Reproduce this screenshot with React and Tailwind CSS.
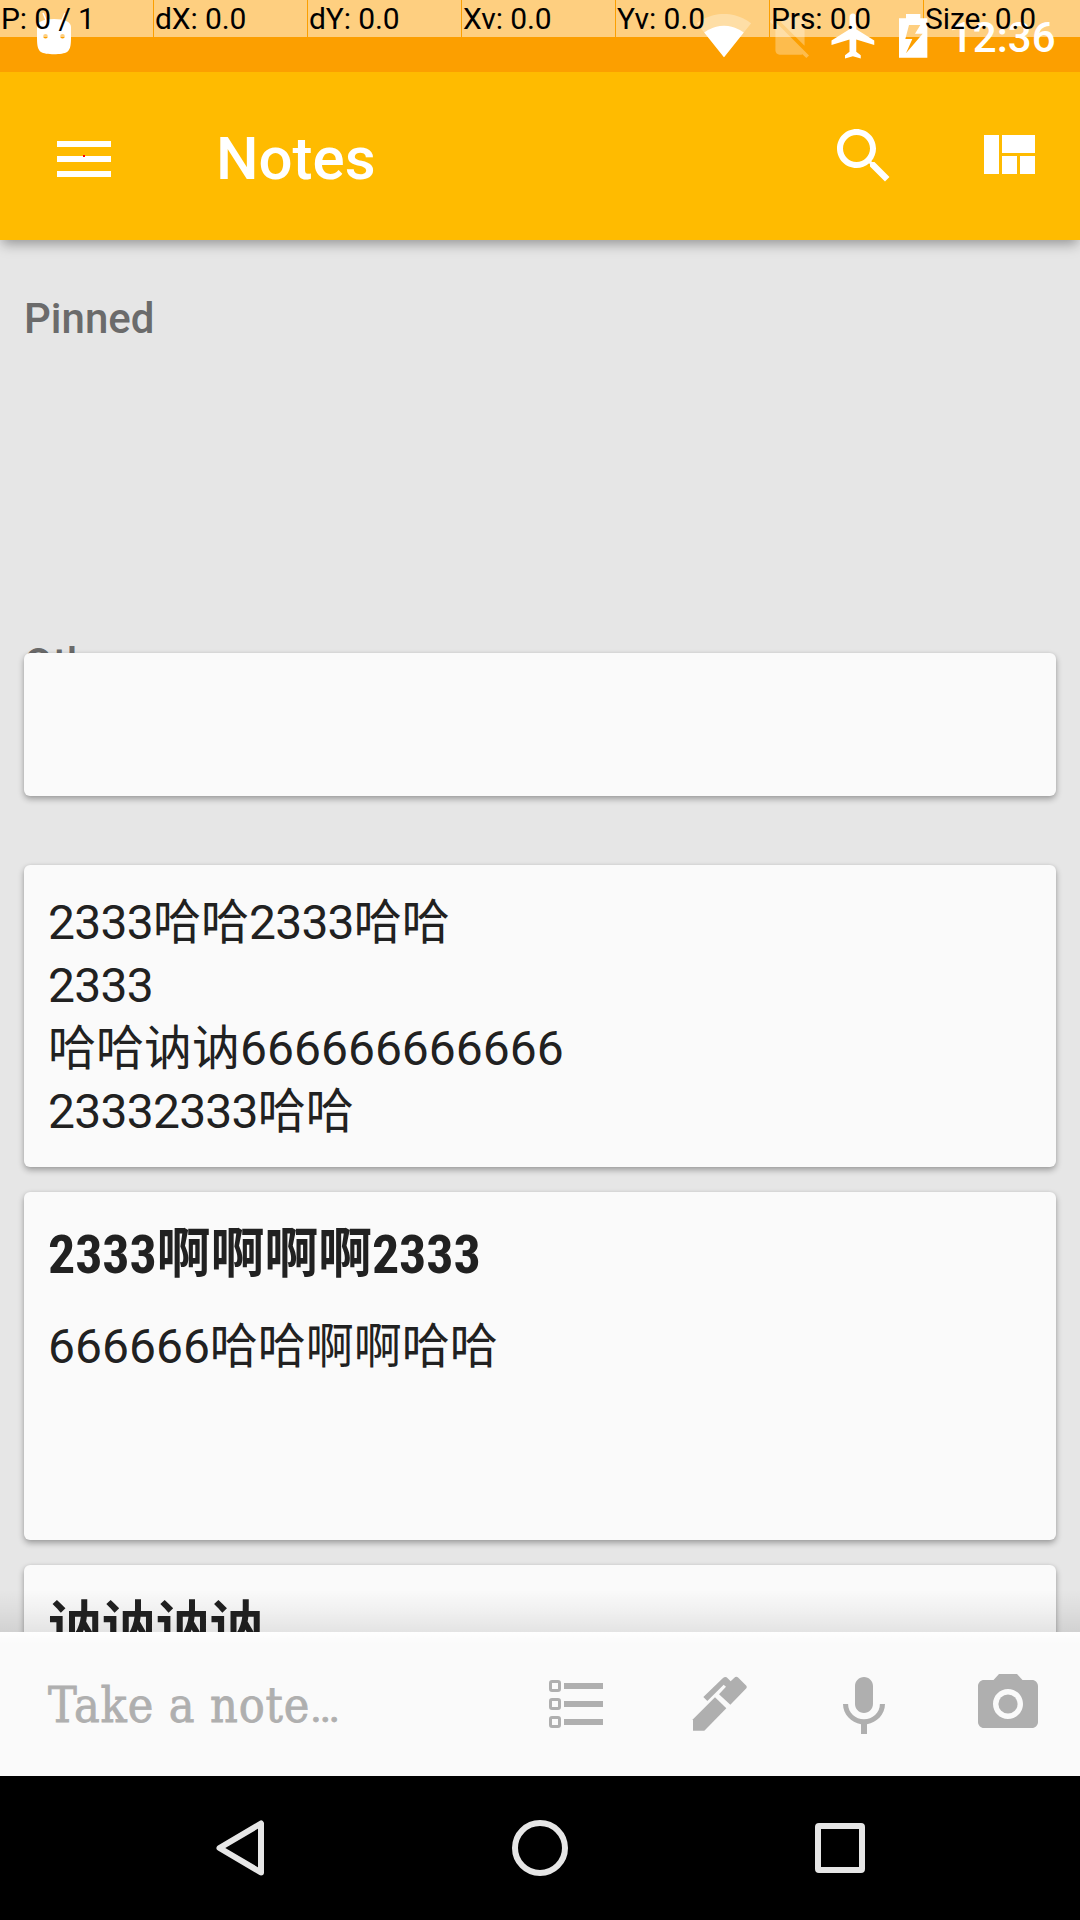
const pointerReadings = ['P: 0 / 1', 'dX: 0.0', 'dY: 0.0', 'Xv: 0.0', 'Yv: 0.0', 'Prs: 0.0', 'Size: 0.0'];

function Icon({ viewBox = '0 0 24 24', className = 'size-[72px]', children }) {
  return (
    <svg viewBox={viewBox} className={`${className} block shrink-0`} fill="currentColor" aria-hidden="true">
      {children}
    </svg>
  );
}

function PointerBar() {
  return (
    <div className="absolute inset-x-0 top-0 z-30 flex h-[37px] gap-px">
      {pointerReadings.map((text) => (
        <div
          key={text}
          className="w-[153px] shrink-0 whitespace-nowrap bg-white/50 pl-px text-[30px] leading-[37px] tracking-[-0.1px] text-black last:w-auto last:flex-1"
        >
          {text}
        </div>
      ))}
    </div>
  );
}

function StatusBar() {
  return (
    <div className="relative z-20 flex h-[72px] items-start bg-[#fc9f00] pl-[36px] text-white">
      <Icon viewBox="0 0 36 60" className="h-[60px] w-[36px]">
        <path
          fillRule="evenodd"
          d="M1 27C1 22 7 19 18 19S35 22 35 27V38C35 46 34 50 31 52C27 55 9 55 5 52C2 50 1 46 1 38ZM9.5 34A2.3 2.3 0 1 0 9.5 38.600A2.300 2.300 0 1 0 9.500 34ZM26.500 34A2.300 2.300 0 1 0 26.500 38.600A2.300 2.300 0 1 0 26.500 34Z"
        />
        <path d="M7 13l3 7M29 13l-3 7" stroke="currentColor" strokeWidth="1.5" />
      </Icon>
      <Icon className="mt-[7px] ml-[624px] size-[56px]">
        <path
          opacity=".3"
          d="M12.010 21.490L23.640 7c-.45-.34-4.930-4-11.640-4C5.280 3 .81 6.660.36 7l11.630 14.490.01.01.01-.01z"
        />
        <path d="M3.530 10.950l8.460 10.540.01.01.01-.01 8.460-10.540C20.040 10.620 16.810 8 12 8c-4.810 0-8.040 2.620-8.470 2.950z" />
      </Icon>
      <Icon className="mt-[11px] ml-[13px] size-[50px]">
        <path
          opacity=".3"
          d="M18.990 5c0-1.100-.89-2-1.990-2h-7L7.660 5.340 19 16.680 18.990 5zM3.650 3.880L2.380 5.150 5 7.770V19c0 1.100.9 2 2 2h10.010c.35 0 .67-.1.96-.26l1.880 1.880 1.270-1.270L3.650 3.880z"
        />
      </Icon>
      <Icon className="mt-[9px] ml-[12px] size-[54px]">
        <path d="M21 16v-2l-8-5V3.500c0-.83-.67-1.500-1.500-1.500S10 2.670 10 3.500V9l-8 5v2l8-2.500V19l-2 1.500V22l3.500-1 3.500 1v-1.500L13 19v-5.500l8 2.500z" />
      </Icon>
      <Icon viewBox="235 39 90 138" className="mt-[13px] ml-[17px] h-[46px] w-[30px]">
        <path
          fillRule="evenodd"
          d="M259 42H302V55H323V173H238V55H259ZM268 75L257 117H278L259 160L309 101H286L302 75Z"
        />
      </Icon>
      <div className="mt-[2px] ml-[21px] text-[42px] leading-[72px] font-medium">12:36</div>
    </div>
  );
}

function Toolbar() {
  return (
    <header className="relative z-10 flex h-[168px] items-center bg-[#ffbb00] pr-[36px] pl-[48px] text-white shadow-[0_6px_12px_-2px_rgba(0,0,0,0.35)]">
      <Icon viewBox="0 0 72 72">
        <path d="M9 21h54v6H9zM9 36h54v6H9zM9 51h54v6H9z" />
        <path d="M35 35h2v2h-2z" fill="#ff0000" />
      </Icon>
      <h1 className="mt-[5px] ml-[96px] flex-1 text-[60px] leading-[72px] font-medium">Notes</h1>
      <div className="flex gap-[72px]">
        <Icon>
          <path d="M15.500 14h-.79l-.28-.27C15.410 12.590 16 11.110 16 9.500 16 5.910 13.090 3 9.500 3S3 5.910 3 9.500 5.910 16 9.500 16c1.610 0 3.090-.59 4.230-1.570l.27.28v.79l5 4.990L20.490 19l-4.990-5zm-6 0C7.010 14 5 11.990 5 9.500S7.010 5 9.500 5 14 7.010 14 9.500 11.990 14 9.500 14z" />
        </Icon>
        <Icon>
          <path d="M10 18h5v-6h-5v6zm-6 0h5V5H4v13zm12 0h5v-6h-5v6zM10 5v6h11V5H10z" />
        </Icon>
      </div>
    </header>
  );
}

function Card({ className, children }) {
  return (
    <article
      className={`${className} relative shrink-0 rounded-[6px] bg-[#fafafa] px-[24px] pt-[26px] text-[#212121] shadow-[0_3px_6px_rgba(0,0,0,0.32),0_0_3px_rgba(0,0,0,0.06)]`}
    >
      {children}
    </article>
  );
}

function Title({ children }) {
  return (
    <h2 className="relative top-px font-['Roboto_Condensed','Noto_Sans_CJK_SC',sans-serif] text-[54px] leading-[72px] font-bold tracking-[-0.15px] whitespace-nowrap">
      {children}
    </h2>
  );
}

// Digit groups set slightly tighter than the characters around them.
function Tight({ children }) {
  return <span className="tracking-[-0.75px]">{children}</span>;
}

function NoteList() {
  return (
    <main className="flex min-h-0 flex-1 flex-col overflow-hidden px-[24px] pt-[55px]">
      <div className="text-[42px] leading-[48px] font-medium text-[#6b6b6b]">Pinned</div>
      <div className="mt-[297px] text-[42px] leading-[48px] font-medium text-[#6b6b6b]">Others</div>
      <Card className="mt-[-35px] h-[143px]" />
      <Card className="mt-[69px] h-[302px]">
        <div className="text-[48px] leading-[63px] whitespace-nowrap">
          <p><Tight>2333</Tight>哈哈<Tight>2333</Tight>哈哈</p>
          <p><Tight>2333</Tight></p>
          <p>哈哈讷讷666666666666</p>
          <p><Tight>23332333</Tight>哈哈</p>
        </div>
      </Card>
      <Card className="mt-[25px] h-[348px]">
        <Title>2333啊啊啊啊2333</Title>
        <p className="mt-[25px] text-[48px] leading-[63px] whitespace-nowrap">666666哈哈啊啊哈哈</p>
      </Card>
      <Card className="mt-[25px] h-[302px]">
        <Title>讷讷讷讷</Title>
      </Card>
    </main>
  );
}

function QuickEntry() {
  return (
    <div className="relative z-10 flex h-[144px] shrink-0 items-center bg-[#fafafa] pr-[36px] pl-[48px] text-[#afafaf]">
      <div className="absolute inset-x-0 bottom-full h-[42px] bg-linear-to-t from-black/9 via-black/4 to-transparent" />
      <div className="absolute inset-x-0 top-0 h-[12px] bg-linear-to-b from-white to-transparent" />
      <div className="mt-[3px] flex-1 font-['Roboto_Slab','DejaVu_Serif_Condensed','DejaVu_Serif',serif] text-[48px] leading-[72px] tracking-[0.9px] whitespace-nowrap [-webkit-text-stroke:0.8px_#afafaf]">
        Take a note<span className="font-['Roboto',sans-serif] text-[44px] tracking-normal">…</span>
      </div>
      <div className="flex gap-[72px]">
        <Icon viewBox="0 0 72 72">
          <path d="M24 15h39v6H24zM24 33h39v6H24zM24 51h39v6H24z" />
          <g fill="none" stroke="currentColor" strokeWidth="3">
            <rect x="10.5" y="13.5" width="9" height="9" rx="1.500" />
            <rect x="10.5" y="31.5" width="9" height="9" rx="1.500" />
            <rect x="10.5" y="49.5" width="9" height="9" rx="1.500" />
          </g>
        </Icon>
        <Icon viewBox="12 24 216 216">
          <path d="M39 178L105 112L139 145L73 212H39Z" />
          <path d="M70 111L129 54Q137 47 143 55L152 64L163 53Q169 48 175 53L199 77Q202 81 199 85L151 134L117 103L138 80L131 74L82 123Z" />
        </Icon>
        <Icon viewBox="0 -1 24 24">
          <path d="M12 14c1.660 0 2.990-1.340 2.990-3L15 5c0-1.660-1.340-3-3-3S9 3.340 9 5v6c0 1.660 1.340 3 3 3zm5.300-3c0 3-2.540 5.100-5.300 5.100S6.700 14 6.700 11H5c0 3.410 2.720 6.230 6 6.720V21h2v-3.280c3.280-.48 6-3.300 6-6.720h-1.700z" />
        </Icon>
        <Icon>
          <circle cx="12" cy="12" r="3.2" />
          <path d="M9 2L7.170 4H4c-1.100 0-2 .9-2 2v12c0 1.100.9 2 2 2h16c1.100 0 2-.9 2-2V6c0-1.100-.9-2-2-2h-3.170L15 2H9zm3 15c-2.760 0-5-2.240-5-5s2.240-5 5-5 5 2.240 5 5-2.240 5-5 5z" />
        </Icon>
      </div>
    </div>
  );
}

function NavigationBar() {
  return (
    <nav className="flex h-[144px] shrink-0 items-center bg-black px-[90px] text-[#e6e6e6]">
      <div className="flex flex-1 justify-center">
        <Icon viewBox="0 0 72 72">
          <path d="M15.500 36L57 11.500V60.500Z" fill="none" stroke="currentColor" strokeWidth="6" strokeLinejoin="round" />
        </Icon>
      </div>
      <div className="flex flex-1 justify-center">
        <Icon viewBox="0 0 72 72">
          <circle cx="36" cy="36" r="25" fill="none" stroke="currentColor" strokeWidth="6" />
        </Icon>
      </div>
      <div className="flex flex-1 justify-center">
        <Icon viewBox="0 0 72 72">
          <rect x="14" y="14" width="44" height="44" rx="1" fill="none" stroke="currentColor" strokeWidth="6" strokeLinejoin="round" />
        </Icon>
      </div>
    </nav>
  );
}

export default function App() {
  return (
    <div className="relative flex h-[1920px] w-[1080px] flex-col overflow-hidden bg-[#e6e6e6] font-['Roboto','Noto_Sans_CJK_SC',sans-serif]">
      <PointerBar />
      <StatusBar />
      <Toolbar />
      <NoteList />
      <QuickEntry />
      <NavigationBar />
    </div>
  );
}
